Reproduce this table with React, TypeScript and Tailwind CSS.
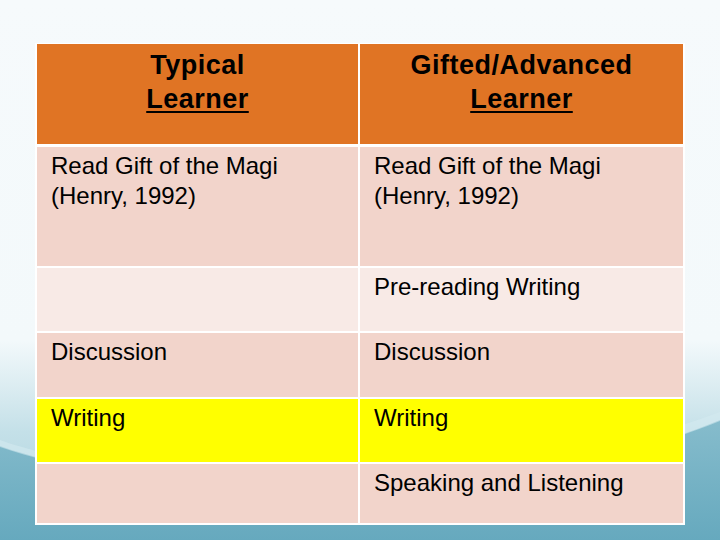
const font = { fontFamily: '"Liberation Sans", Arial, sans-serif' } as const

type Row = {
  left: string[]
  right: string[]
  tone: 'pink' | 'light' | 'yellow'
  h: string
}

const ROWS: Row[] = [
  { left: ['Read Gift of the Magi', '(Henry, 1992)'], right: ['Read Gift of the Magi', '(Henry, 1992)'], tone: 'pink', h: 'h-[119px]' },
  { left: [], right: ['Pre-reading Writing'], tone: 'light', h: 'h-[63px]' },
  { left: ['Discussion'], right: ['Discussion'], tone: 'pink', h: 'h-[64px]' },
  { left: ['Writing'], right: ['Writing'], tone: 'yellow', h: 'h-[63px]' },
  { left: [], right: ['Speaking and Listening'], tone: 'pink', h: 'h-[59px]' },
]

const TONE = {
  pink: 'bg-[#f2d4cb]',
  light: 'bg-[#f8eae6]',
  yellow: 'bg-[#ffff00]',
}

function Backdrop() {
  return (
    <svg className="absolute inset-0" width="720" height="540" viewBox="0 0 720 540">
      <defs>
        <linearGradient id="sky" x1="0" y1="0" x2="0" y2="540" gradientUnits="userSpaceOnUse">
          <stop offset="0" stopColor="#f6fafc" />
          <stop offset="0.63" stopColor="#f3f9fb" />
          <stop offset="0.8" stopColor="#c4e0e8" />
          <stop offset="1" stopColor="#a6cfdb" />
        </linearGradient>
        <linearGradient id="sea" x1="0" y1="420" x2="0" y2="540" gradientUnits="userSpaceOnUse">
          <stop offset="0" stopColor="#86bccc" />
          <stop offset="1" stopColor="#66a9be" />
        </linearGradient>
      </defs>
      <rect width="720" height="540" fill="url(#sky)" />
      <path d="M0,446 C150,500 520,505 720,420 L720,540 L0,540 Z" fill="url(#sea)" />
      <path d="M0,440 C130,488 500,496 720,412 L720,421 C520,504 150,500 0,447 Z" fill="#d6ebf1" opacity="0.55" />
    </svg>
  )
}

function Cell({ lines, className }: { lines: string[]; className: string }) {
  return (
    <div className={`pt-[4px] pl-[14px] pr-2 text-[24px] leading-[30px] text-black ${className}`}>
      {lines.map((l) => (
        <div key={l}>{l}</div>
      ))}
    </div>
  )
}

function Head({ top }: { top: string }) {
  return (
    <div className="h-[100px] bg-[#e07424] pt-[4px] text-center text-[27px] leading-[34px] font-bold tracking-[0.5px] text-black">
      <div>{top}</div>
      <div className="underline decoration-2 underline-offset-[3px]">Learner</div>
    </div>
  )
}

export default function App() {
  return (
    <div className="relative w-[720px] h-[540px] overflow-hidden bg-white" style={font}>
      <Backdrop />
      <div className="relative pt-[43px] pl-[35px]">
        <div className="w-[650px] bg-white px-[2px] pt-[1px] pb-[2px]">
          <div className="grid grid-cols-[321px_323px] gap-x-[2px]">
            <Head top="Typical" />
            <Head top="Gifted/Advanced" />
          </div>
          <div className="mt-[3px] flex flex-col gap-y-[2px]">
            {ROWS.map((r, i) => (
              <div key={i} className="grid grid-cols-[321px_323px] gap-x-[2px]">
                <Cell lines={r.left} className={`${r.h} ${TONE[r.tone]}`} />
                <Cell lines={r.right} className={`${r.h} ${TONE[r.tone]}`} />
              </div>
            ))}
          </div>
        </div>
      </div>
    </div>
  )
}
